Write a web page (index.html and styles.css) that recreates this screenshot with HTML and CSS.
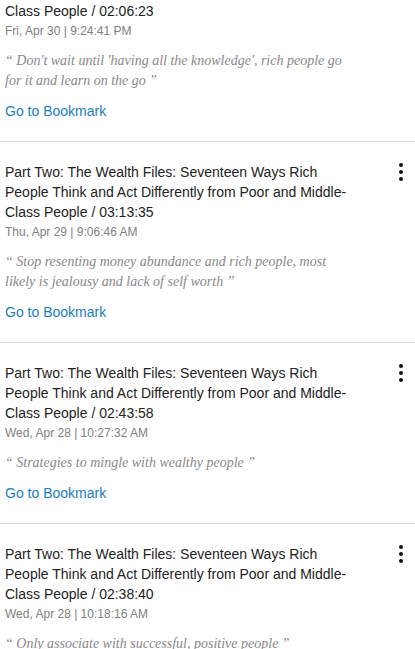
FILE: index.html
```html
<!DOCTYPE html>
<html>
<head>
<meta charset="utf-8">
<link rel="stylesheet" href="styles.css">
</head>
<body>
<ul class="list">
  <li class="item">
    <div class="body">
      <div class="title">Part Two: The Wealth Files: Seventeen Ways Rich People Think and Act Differently from Poor and Middle-Class People / 02:06:23</div>
      <div class="date">Fri, Apr 30 | 9:24:41 PM</div>
      <p class="quote">“ Don't wait until 'having all the knowledge', rich people go for it and learn on the go ”</p>
      <a class="link" href="#">Go to Bookmark</a>
    </div>
    <button class="menu" aria-label="More"><svg viewBox="0 0 24 24" width="24" height="24"><circle cx="12" cy="5" r="2"/><circle cx="12" cy="12" r="2"/><circle cx="12" cy="19" r="2"/></svg></button>
  </li>
  <li class="item">
    <div class="body">
      <div class="title">Part Two: The Wealth Files: Seventeen Ways Rich People Think and Act Differently from Poor and Middle-Class People / 03:13:35</div>
      <div class="date">Thu, Apr 29 | 9:06:46 AM</div>
      <p class="quote">“ Stop resenting money abundance and rich people, most likely is jealousy and lack of self worth ”</p>
      <a class="link" href="#">Go to Bookmark</a>
    </div>
    <button class="menu" aria-label="More"><svg viewBox="0 0 24 24" width="24" height="24"><circle cx="12" cy="5" r="2"/><circle cx="12" cy="12" r="2"/><circle cx="12" cy="19" r="2"/></svg></button>
  </li>
  <li class="item">
    <div class="body">
      <div class="title">Part Two: The Wealth Files: Seventeen Ways Rich People Think and Act Differently from Poor and Middle-Class People / 02:43:58</div>
      <div class="date">Wed, Apr 28 | 10:27:32 AM</div>
      <p class="quote">“ Strategies to mingle with wealthy people ”</p>
      <a class="link" href="#">Go to Bookmark</a>
    </div>
    <button class="menu" aria-label="More"><svg viewBox="0 0 24 24" width="24" height="24"><circle cx="12" cy="5" r="2"/><circle cx="12" cy="12" r="2"/><circle cx="12" cy="19" r="2"/></svg></button>
  </li>
  <li class="item">
    <div class="body">
      <div class="title">Part Two: The Wealth Files: Seventeen Ways Rich People Think and Act Differently from Poor and Middle-Class People / 02:38:40</div>
      <div class="date">Wed, Apr 28 | 10:18:16 AM</div>
      <p class="quote">“ Only associate with successful, positive people ”</p>
      <a class="link" href="#">Go to Bookmark</a>
    </div>
    <button class="menu" aria-label="More"><svg viewBox="0 0 24 24" width="24" height="24"><circle cx="12" cy="5" r="2"/><circle cx="12" cy="12" r="2"/><circle cx="12" cy="19" r="2"/></svg></button>
  </li>
</ul>
</body>
</html>
```
FILE: styles.css
```css
html, body {
  margin: 0;
  padding: 0;
  background: #fff;
  overflow: hidden;
}
body {
  font-family: "Liberation Sans", Arial, sans-serif;
  color: #222;
}
.list {
  list-style: none;
  margin: -59px 0 0 0;
  padding: 0;
}
.item {
  display: flex;
  align-items: flex-start;
  gap: 33px;
  padding: 20px 2px 20px 5px;
  border-bottom: 1px solid #dcdcdc;
}
.body {
  flex: 1;
  min-width: 0;
}
.title {
  font-size: 14px;
  line-height: 20px;
  color: #222;
}
.date {
  margin-top: 2px;
  font-size: 12px;
  line-height: 16px;
  color: #808080;
}
.quote {
  margin: 12px 0 10px;
  font-family: "Liberation Serif", "Times New Roman", serif;
  font-style: italic;
  font-size: 14px;
  line-height: 20px;
  color: #888;
}
.link {
  display: block;
  font-size: 14px;
  line-height: 20px;
  color: #1a7dc0;
  text-decoration: none;
}
.menu {
  flex: none;
  width: 24px;
  height: 24px;
  margin-top: -2px;
  padding: 0;
  border: 0;
  background: none;
}
.menu svg {
  display: block;
  fill: #111;
}
```
